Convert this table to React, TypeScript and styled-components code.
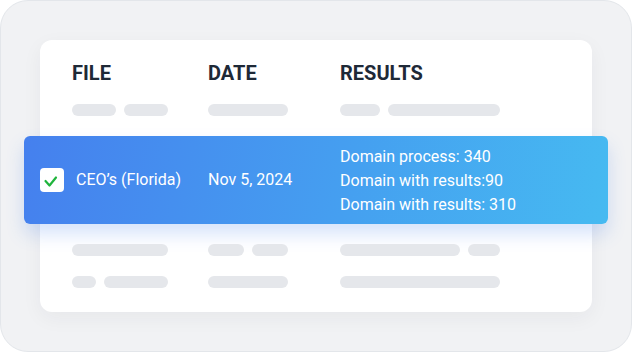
import styled, { createGlobalStyle } from 'styled-components';

const GlobalStyle = createGlobalStyle`
  html, body {
    margin: 0;
    padding: 0;
    background: #ffffff;
  }
  body {
    font-family: Roboto, "Liberation Sans", sans-serif;
  }
`;

const Frame = styled.div`
  box-sizing: border-box;
  width: 632px;
  height: 352px;
  padding: 39px;
  background: #f1f2f4;
  border: 1px solid #e3e6ea;
  border-radius: 28px;
`;

const Card = styled.div`
  box-sizing: border-box;
  height: 272px;
  padding: 22px 32px 24px;
  background: #ffffff;
  border-radius: 12px;
  box-shadow: 0 6px 20px rgba(30, 41, 59, 0.05);
  display: flex;
  flex-direction: column;
  gap: 20px;
`;

const Columns = styled.div`
  display: grid;
  grid-template-columns: 136px 132px 1fr;
  align-items: center;
`;

const HeaderCell = styled.div`
  font-size: 20px;
  line-height: 22px;
  font-weight: 700;
  color: #1e2937;
`;

const BarGroup = styled.div`
  display: flex;
  gap: 8px;
  height: 12px;
`;

const Bar = styled.div<{ $w: number }>`
  width: ${({ $w }) => $w}px;
  height: 12px;
  border-radius: 6px;
  background: #e5e7eb;
`;

const ActiveRow = styled.div`
  box-sizing: border-box;
  height: 88px;
  margin: 0 -48px;
  padding: 0 16px;
  display: grid;
  grid-template-columns: 168px 132px 1fr;
  align-items: center;
  border-radius: 6px;
  background: linear-gradient(100deg, #4580ee 0%, #459ff0 55%, #46baf1 100%);
  box-shadow: 0 10px 18px rgba(69, 128, 238, 0.22);
  color: #ffffff;
  font-size: 16px;
  line-height: 24px;
`;

const FileCell = styled.div`
  display: flex;
  align-items: center;
  gap: 12px;
`;

const Check = styled.div`
  width: 24px;
  height: 24px;
  border-radius: 4px;
  background: #ffffff;
  display: flex;
  align-items: center;
  justify-content: center;
`;

const Results = styled.div`
  display: flex;
  flex-direction: column;
  padding-top: 1px;
`;

type BarRow = { file: number[]; date: number[]; results: number[] };

const topRows: BarRow[] = [{ file: [44, 44], date: [80], results: [40, 112] }];

const bottomRows: BarRow[] = [
  { file: [96], date: [36, 36], results: [120, 32] },
  { file: [24, 64], date: [80], results: [160] },
];

function SkeletonRow({ row }: { row: BarRow }) {
  return (
    <Columns>
      {[row.file, row.date, row.results].map((bars, i) => (
        <BarGroup key={i}>
          {bars.map((w, j) => (
            <Bar key={j} $w={w} />
          ))}
        </BarGroup>
      ))}
    </Columns>
  );
}

export default function App() {
  return (
    <>
      <GlobalStyle />
      <Frame>
        <Card>
          <Columns>
            <HeaderCell>FILE</HeaderCell>
            <HeaderCell>DATE</HeaderCell>
            <HeaderCell>RESULTS</HeaderCell>
          </Columns>
          {topRows.map((r, i) => (
            <SkeletonRow key={i} row={r} />
          ))}
          <ActiveRow>
            <FileCell>
              <Check>
                <svg width="24" height="24" viewBox="0 0 24 24" fill="none">
                  <polyline
                    points="5.5,13 9.5,17.5 16,9.5"
                    stroke="#1fb43c"
                    strokeWidth="2.2"
                    strokeLinecap="round"
                    strokeLinejoin="round"
                  />
                </svg>
              </Check>
              <span>CEO’s (Florida)</span>
            </FileCell>
            <div>Nov 5, 2024</div>
            <Results>
              <span>Domain process: 340</span>
              <span>Domain with results:90</span>
              <span>Domain with results: 310</span>
            </Results>
          </ActiveRow>
          {bottomRows.map((r, i) => (
            <SkeletonRow key={i} row={r} />
          ))}
        </Card>
      </Frame>
    </>
  );
}
